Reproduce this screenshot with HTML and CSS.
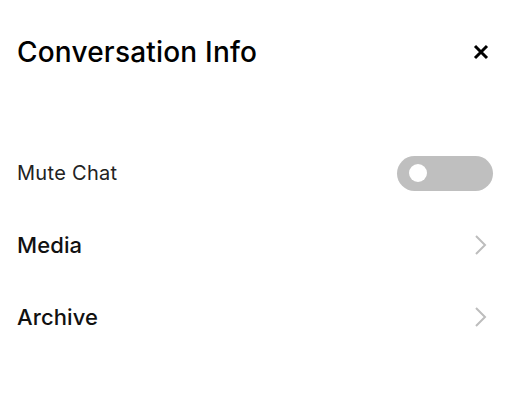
FILE: index.html
```html
<!DOCTYPE html>
<html lang="en">
<head>
  <meta charset="UTF-8">
  <title>Conversation Info</title>
  <link rel="stylesheet" href="styles.css">
</head>
<body>

<div class="panel">
  <div class="header">
    <h1 class="title">Conversation Info</h1>
    <button class="close" aria-label="Close">
      <svg width="16" height="16" viewBox="0 0 16 16">
        <path d="M2 2 L14 14 M14 2 L2 14" stroke="#000" stroke-width="3" stroke-linecap="butt"/>
      </svg>
    </button>
  </div>

  <div class="list">
    <div class="row">
      <span class="label light">Mute Chat</span>
      <div class="toggle"><span class="knob"></span></div>
    </div>
    <div class="row">
      <span class="label">Media</span>
      <svg class="chevron" width="14" height="22" viewBox="0 0 14 22">
        <path d="M2 2 L11 11 L2 20" fill="none" stroke="#bdbdbd" stroke-width="2"/>
      </svg>
    </div>
    <div class="row">
      <span class="label">Archive</span>
      <svg class="chevron" width="14" height="22" viewBox="0 0 14 22">
        <path d="M2 2 L11 11 L2 20" fill="none" stroke="#bdbdbd" stroke-width="2"/>
      </svg>
    </div>
  </div>
</div>

</body>
</html>
```

FILE: styles.css
```css
body {
  margin: 0;
  background: #fff;
  font-family: 'Inter', 'Liberation Sans', sans-serif;
  color: #111;
}

.panel {
  padding: 0 15px 0 17px;
}

.header {
  display: flex;
  justify-content: space-between;
  align-items: center;
  height: 104px;
}

.title {
  margin: 0;
  font-size: 28px;
  font-weight: 500;
  letter-spacing: 0.2px;
  color: #000;
}

.close {
  border: none;
  background: none;
  padding: 0;
  width: 16px;
  height: 16px;
  margin-right: 4px;
  cursor: pointer;
}

.list {
  margin-top: 33px;
}

.row {
  display: flex;
  justify-content: space-between;
  align-items: center;
  height: 72px;
}

.label {
  font-size: 22px;
  font-weight: 500;
  letter-spacing: 0.1px;
  color: #111;
}

.label.light {
  font-size: 20px;
  font-weight: 400;
  letter-spacing: 0.3px;
  color: #222;
}

.toggle {
  width: 96px;
  height: 35px;
  border-radius: 18px;
  background: #bfbfbf;
  display: flex;
  align-items: center;
  padding-left: 12px;
  box-sizing: border-box;
}

.knob {
  width: 18px;
  height: 18px;
  border-radius: 50%;
  background: #fff;
}

.chevron {
  margin-right: 5px;
}
```
